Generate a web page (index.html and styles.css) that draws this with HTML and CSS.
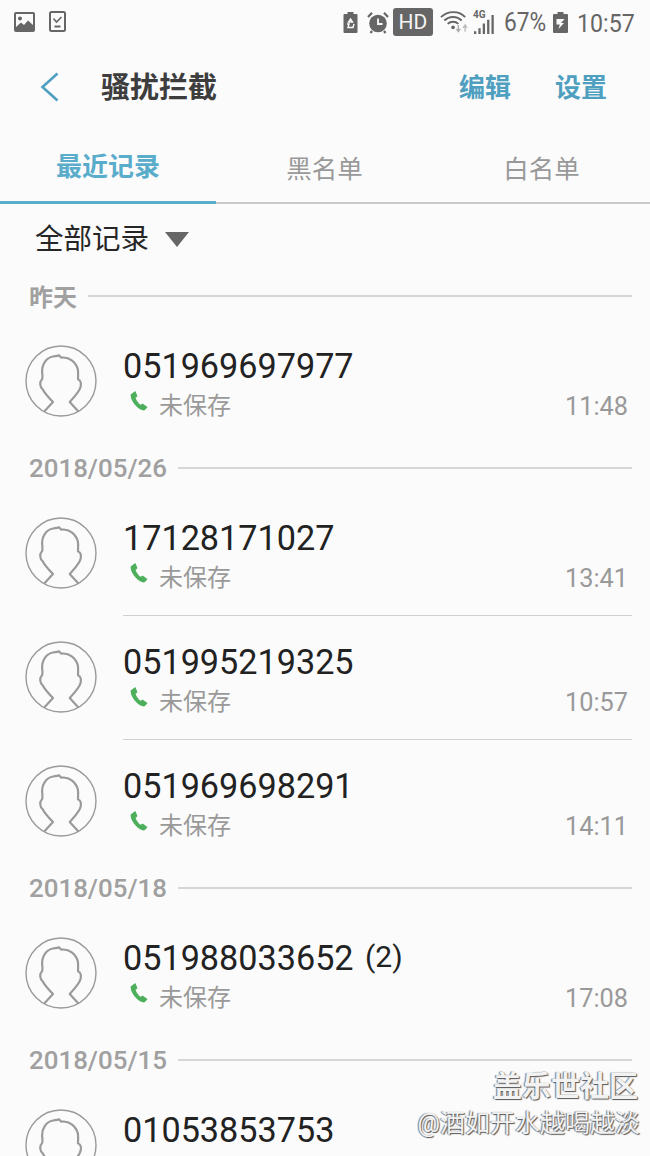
FILE: index.html
```html
<!DOCTYPE html>
<html lang="zh-CN">
<head>
<meta charset="utf-8">
<title>骚扰拦截</title>
<link rel="stylesheet" href="styles.css">
</head>
<body>
<svg class="defs" width="0" height="0">
  <defs>
    <symbol id="avatar" viewBox="0 0 72 72">
      <circle cx="36" cy="36" r="35" fill="none" stroke="#9a9a9a" stroke-width="1.4"/>
      <path d="M19.7 66 L28 57 C24 53 20 49 17.5 44 C15 42.5 14.5 37 16.5 35 C18 33.5 17.6 32 17.3 29 C16 19 22 12.5 28 11.5 C30 11 32 11.5 34 10.3 L36.3 12.7 C44 11.5 51 17 52.8 24.3 C53.5 28 53 31 53 34.3 C56 35.5 57 39 54.7 44.3 C52 49 48.5 53 44.7 57 L53 66" fill="none" stroke="#9a9a9a" stroke-width="2.2" stroke-linejoin="round" stroke-linecap="round"/>
    </symbol>
    <symbol id="phone" viewBox="0 0 18 20">
      <path d="M1 3.2 L4.6.4 C5 .1 5.5.3 5.7.7 L7.3 4.8 C7.4 5.2 7.3 5.6 7 5.8 L5.6 6.8 C6 9 8.4 12.6 10.7 13.7 L12.2 12.8 C12.6 12.6 13 12.6 13.3 12.9 L17 15.7 C17.4 16 17.4 16.5 17.1 16.8 L14.6 19.3 C10 20.5 1.2 12 .6 4.5 C.6 4 .7 3.5 1 3.2 Z" fill="#4caf5c"/>
    </symbol>
  </defs>
</svg>
<div class="page">
  <header class="status">
    <div class="status-left">
      <svg width="21" height="20" viewBox="0 0 21 20"><rect width="21" height="20" rx="2" fill="#666"/><rect x="2" y="2" width="17" height="16" fill="#fbfbfb"/><circle cx="6" cy="6.5" r="2" fill="#666"/><path d="M2 15 L7 10.5 L10 13 L14 8.5 L19 13 V18 H2 Z" fill="#666"/></svg>
      <svg width="17" height="21" viewBox="0 0 17 21"><rect x="1" y="1" width="15" height="19" rx="1.5" fill="none" stroke="#666" stroke-width="2"/><path d="M4.5 7.5 L7.5 11 L12.5 6" fill="none" stroke="#666" stroke-width="1.6"/><path d="M5.5 15.5 H11.5" stroke="#666" stroke-width="2"/></svg>
    </div>
    <div class="status-right">
      <svg class="ic-saver" width="15" height="21" viewBox="0 0 14 21"><path d="M4 0 H10 V2 H13 Q14 2 14 3 V20 Q14 21 13 21 H1 Q0 21 0 20 V3 Q0 2 1 2 H4 Z" fill="#666"/><path d="M7 7 L9 10 H5 Z M3.5 12 L5.5 12 L4.5 15.5 H9.5 L10.5 12" fill="none" stroke="#fbfbfb" stroke-width="1.4"/></svg>
      <svg class="ic-alarm" width="22" height="23" viewBox="0 0 22 23"><circle cx="11" cy="12.5" r="8.8" fill="#666"/><path d="M11 7.5 V13 H15.5" fill="none" stroke="#fbfbfb" stroke-width="1.8"/><path d="M1 6 L5 1.8 M21 6 L17 1.8 M5 20 L3.5 22 M17 20 L18.5 22" stroke="#666" stroke-width="2.2"/></svg>
      <span class="hd">HD</span>
      <svg class="ic-wifi" width="28" height="24" viewBox="0 0 29 24"><path d="M1 7 C8 0 20 0 26 7 M4.5 10.5 C9.5 5.5 17.5 5.5 22.5 10.5 M8 14 C11 11 16 11 19 14" fill="none" stroke="#666" stroke-width="2"/><circle cx="13.5" cy="17.5" r="1.9" fill="#666"/><path d="M19 15 V21 M17 19 L19 22 L21 19" stroke="#aaa" stroke-width="1.4" fill="none"/><path d="M26 22 V16 M24 18 L26 15 L28 18" stroke="#bbb" stroke-width="1.4" fill="none"/></svg>
      <span class="signal">
        <span class="net">4G</span>
        <svg width="21" height="19" viewBox="0 0 22 20"><path d="M1 17 H3.4 V20 H1 Z M5.6 14 H8 V20 H5.6 Z M10.2 9 H12.6 V20 H10.2 Z" fill="#666"/><path d="M14.8 5 H17.2 V20 H14.8 Z M19.4 0 H21.8 V20 H19.4 Z" fill="#666"/></svg>
      </span>
      <span class="pct">67%</span>
      <svg class="ic-batt" width="15" height="21" viewBox="0 0 15 21"><path d="M4.5 0 H10.5 V2 H14 Q15 2 15 3 V20 Q15 21 14 21 H1 Q0 21 0 20 V3 Q0 2 1 2 H4.5 Z" fill="#666"/><path d="M3.5 7 H11.5 L8 11 H11 L5.5 17 L6.8 12.5 H3.5 Z" fill="#fbfbfb"/></svg>
      <span class="clock">10:57</span>
    </div>
  </header>

  <nav class="appbar">
    <svg class="back" width="20" height="30" viewBox="0 0 20 30"><path d="M17.5 1.5 L2.5 15 L17.5 28.5" fill="none" stroke="#4f9fc0" stroke-width="2.6"/></svg>
    <h1 class="title">骚扰拦截</h1>
    <a class="action action-edit">编辑</a>
    <a class="action action-set">设置</a>
  </nav>

  <div class="tabs">
    <div class="tab tab-on">最近记录</div>
    <div class="tab">黑名单</div>
    <div class="tab">白名单</div>
  </div>

  <div class="filter">
    <span>全部记录</span>
    <i class="caret"></i>
  </div>

  <div class="sec sec-first"><span>昨天</span><i></i></div>
  <div class="row">
    <svg class="avatar"><use href="#avatar"/></svg>
    <div class="info">
      <div class="num">051969697977</div>
      <div class="sub"><svg class="phone"><use href="#phone"/></svg><span>未保存</span><time>11:48</time></div>
    </div>
  </div>

  <div class="sec"><span>2018/05/26</span><i></i></div>
  <div class="row">
    <svg class="avatar"><use href="#avatar"/></svg>
    <div class="info line">
      <div class="num">17128171027</div>
      <div class="sub"><svg class="phone"><use href="#phone"/></svg><span>未保存</span><time>13:41</time></div>
    </div>
  </div>
  <div class="row">
    <svg class="avatar"><use href="#avatar"/></svg>
    <div class="info line">
      <div class="num">051995219325</div>
      <div class="sub"><svg class="phone"><use href="#phone"/></svg><span>未保存</span><time>10:57</time></div>
    </div>
  </div>
  <div class="row">
    <svg class="avatar"><use href="#avatar"/></svg>
    <div class="info">
      <div class="num">051969698291</div>
      <div class="sub"><svg class="phone"><use href="#phone"/></svg><span>未保存</span><time>14:11</time></div>
    </div>
  </div>

  <div class="sec"><span>2018/05/18</span><i></i></div>
  <div class="row">
    <svg class="avatar"><use href="#avatar"/></svg>
    <div class="info">
      <div class="num">051988033652 <small>(2)</small></div>
      <div class="sub"><svg class="phone"><use href="#phone"/></svg><span>未保存</span><time>17:08</time></div>
    </div>
  </div>

  <div class="sec"><span>2018/05/15</span><i></i></div>
  <div class="row">
    <svg class="avatar"><use href="#avatar"/></svg>
    <div class="info">
      <div class="num">01053853753</div>
    </div>
  </div>

  <div class="mark">
    <div class="mark-a">盖乐世社区</div>
    <div class="mark-b">@酒如开水越喝越淡</div>
  </div>
</div>
</body>
</html>
```
FILE: styles.css
```css
* { box-sizing: border-box; }
html, body { margin: 0; padding: 0; }
body {
  background: #fbfbfb;
  font-family: Roboto, "Noto Sans CJK SC", sans-serif;
  overflow: hidden;
}
.defs { position: absolute; }
.page {
  position: relative;
  width: 650px;
  height: 1156px;
  overflow: hidden;
  background: #fbfbfb;
}
.status {
  height: 44px;
  display: flex;
  justify-content: space-between;
  align-items: center;
  padding: 0 16px 0 14px;
  color: #666;
}
.status-left { display: flex; align-items: center; gap: 14px; margin-top: -1px; }
.status-right { display: flex; align-items: center; }
.status-right svg { flex: none; }
.ic-saver { margin-right: 9px; }
.ic-alarm { margin-right: 4px; }
.hd {
  flex: none;
  width: 40px;
  height: 28px;
  border-radius: 3px;
  background: #666;
  color: #f5f5f5;
  font-size: 21px;
  line-height: 28px;
  text-align: center;
  margin-right: 7px;
}
.ic-wifi { margin-right: 5px; }
.signal { position: relative; display: block; flex: none; width: 21px; height: 24px; margin-right: 10px; }
.signal svg { position: absolute; left: 0; bottom: 0; }
.net { position: absolute; left: 0; top: 0; font-size: 10px; line-height: 10px; font-weight: 700; color: #666; }
.pct {
  flex: none;
  width: 41px;
  margin-right: 8px;
  font-size: 26px;
  white-space: nowrap;
  transform: scaleX(.875);
  transform-origin: left center;
}
.ic-batt { margin-right: 9px; }
.clock {
  flex: none;
  width: 57px;
  font-size: 26.5px;
  white-space: nowrap;
  transform: scaleX(.875);
  transform-origin: left center;
}

.appbar {
  height: 88px;
  position: relative;
  display: flex;
  align-items: center;
  padding: 0 0 6px 40px;
}
.back { flex: none; margin-top: 3px; }
.title {
  margin: 0 0 0 41px;
  font-size: 29px;
  font-weight: 700;
  color: #3d3d3d;
  flex: 1;
}
.action { font-size: 26px; font-weight: 700; color: #4f9fc0; }
.action-edit { margin-right: 44px; }
.action-set { margin-right: 43px; }

.tabs {
  height: 72px;
  display: grid;
  grid-template-columns: 216px 217px 217px;
  border-bottom: 2px solid #c9c9c9;
}
.tab {
  display: flex;
  align-items: center;
  justify-content: center;
  font-size: 25.5px;
  color: #999;
  margin-bottom: -2px;
  padding-bottom: 4px;
}
.tab-on {
  font-size: 26px;
  font-weight: 700;
  color: #5aaccb;
  border-bottom: 3px solid #5aaccb;
}
.filter {
  height: 68px;
  display: flex;
  align-items: center;
  padding: 0 0 3px 35px;
  font-size: 28.5px;
  color: #262626;
}
.caret {
  width: 0;
  height: 0;
  margin: 5px 0 0 16px;
  border-left: 12px solid transparent;
  border-right: 12px solid transparent;
  border-top: 15px solid #666;
}
.sec {
  height: 48px;
  display: flex;
  align-items: center;
  padding: 0 18px 1px 29px;
  font-size: 25.9px;
  font-weight: 500;
  color: #a0a0a0;
}
.sec-first { padding-bottom: 1px; }
.sec-first span { font-size: 24px; font-weight: 700; }
.sec i {
  flex: 1;
  height: 2px;
  margin-left: 11px;
  background: #d6d6d6;
}
.row {
  height: 124px;
  display: flex;
  padding-left: 25px;
}
.avatar {
  flex: none;
  width: 72px;
  height: 72px;
  margin-top: 25px;
}
.info {
  flex: 1;
  margin: 0 18px 0 26px;
  display: flex;
  flex-direction: column;
  padding-top: 26px;
}
.line { border-bottom: 1px solid #cfcfcf; }
.num {
  font-size: 34.2px;
  line-height: 40px;
  height: 40px;
  color: #222;
  white-space: nowrap;
}
.num small { font-size: 30px; line-height: 1; position: relative; top: -3px; margin-left: 3px; }
.sub {
  display: flex;
  align-items: center;
  height: 34px;
  font-size: 24px;
  color: #999;
  position: relative;
}
.phone { width: 18px; height: 20px; margin: -4px 11px 0 7px; flex: none; }
.sub time { margin: 6px 4px 0 auto; font-size: 25.3px; }
.mark {
  position: absolute;
  right: 10px;
  top: 1069px;
  text-align: right;
  color: #f2f2f2;
  text-shadow: 1px 1px 1px #555, -1px 0 1px #777;
  white-space: nowrap;
}
.mark-a { font-size: 29px; font-weight: 700; line-height: 36px; margin-right: 2px; }
.mark-b { font-size: 25px; line-height: 38px; }
```
